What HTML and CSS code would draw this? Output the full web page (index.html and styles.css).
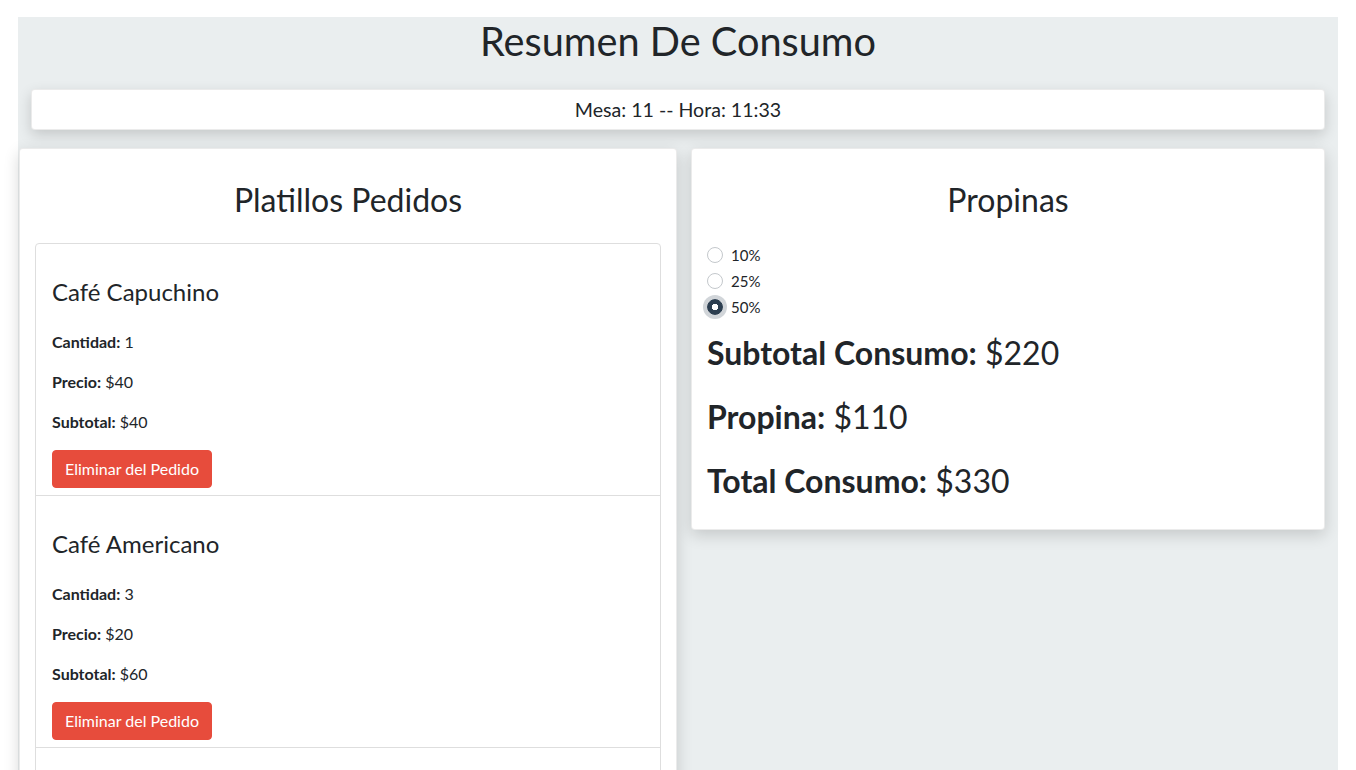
FILE: index.html
```html
<!DOCTYPE html>
<html lang="es">
<head>
<meta charset="utf-8">
<title>Resumen De Consumo</title>
<link rel="stylesheet" href="styles.css">
</head>
<body>
<div class="page">
  <h1 class="title">Resumen De Consumo</h1>
  <div class="info-card">Mesa: 11 -- Hora: 11:33</div>
  <div class="columns">
    <section class="card card-left">
      <h2 class="card-title">Platillos Pedidos</h2>
      <ul class="list">
        <li class="item">
          <h4 class="item-name">Café Capuchino</h4>
          <p class="line"><b>Cantidad:</b> 1</p>
          <p class="line"><b>Precio:</b> $40</p>
          <p class="line"><b>Subtotal:</b> $40</p>
          <button class="btn-danger" type="button">Eliminar del Pedido</button>
        </li>
        <li class="item">
          <h4 class="item-name">Café Americano</h4>
          <p class="line"><b>Cantidad:</b> 3</p>
          <p class="line"><b>Precio:</b> $20</p>
          <p class="line"><b>Subtotal:</b> $60</p>
          <button class="btn-danger" type="button">Eliminar del Pedido</button>
        </li>
        <li class="item">
          <h4 class="item-name">Café Latte</h4>
          <p class="line"><b>Cantidad:</b> 4</p>
          <p class="line"><b>Precio:</b> $30</p>
          <p class="line"><b>Subtotal:</b> $120</p>
          <button class="btn-danger" type="button">Eliminar del Pedido</button>
        </li>
      </ul>
    </section>
    <section class="card card-right">
      <h2 class="card-title">Propinas</h2>
      <div class="radios">
        <label class="radio-row"><input type="radio" name="tip" class="radio"> <span>10%</span></label>
        <label class="radio-row"><input type="radio" name="tip" class="radio"> <span>25%</span></label>
        <label class="radio-row"><input type="radio" name="tip" class="radio focus" checked> <span>50%</span></label>
      </div>
      <h2 class="total"><b>Subtotal Consumo:</b> $220</h2>
      <h2 class="total"><b>Propina:</b> $110</h2>
      <h2 class="total"><b>Total Consumo:</b> $330</h2>
    </section>
  </div>
</div>
</body>
</html>
```

FILE: styles.css
```css
* { box-sizing: border-box; }

html, body {
  margin: 0;
  padding: 0;
  background: #ffffff;
}

body {
  font-family: Lato, "Noto Sans", sans-serif;
  font-size: 16px;
  line-height: 1.5;
  color: #212529;
}

.page {
  width: 1320px;
  margin: 17px auto 0;
  background: #eaeeef;
  padding: 0 13px 40px 0;
  min-height: 900px;
}

.title {
  margin: 0 0 24px 13px;
  font-size: 39.7px;
  font-weight: 400;
  line-height: 48px;
  text-align: center;
}

.info-card {
  margin-left: 13px;
  background: #fff;
  border: 1px solid rgba(0,0,0,0.08);
  border-radius: 4px;
  box-shadow: 0 5px 14px rgba(0,0,0,0.16);
  text-align: center;
  font-size: 19.6px;
  line-height: 25px;
  padding: 7px 16px;
  height: 41px;
}

.columns {
  display: grid;
  grid-template-columns: 658px 634px;
  column-gap: 14px;
  align-items: start;
  margin-top: 18px;
  margin-left: 1px;
}

.card {
  background: #fff;
  border: 1px solid rgba(0,0,0,0.08);
  border-radius: 4px;
  box-shadow: 0 5px 16px rgba(0,0,0,0.16);
  padding: 32px 15px 8px;
}

.card-title {
  margin: 0 0 24px;
  font-size: 32px;
  font-weight: 400;
  line-height: 38.4px;
  text-align: center;
}

.list {
  list-style: none;
  margin: 0;
  padding: 0;
  border: 1px solid #dedede;
  border-radius: 4px;
}

.item {
  padding: 34px 16px 7px;
  border-bottom: 1px solid #dedede;
}

.item-name {
  margin: 0 0 23px;
  font-size: 24px;
  font-weight: 400;
  line-height: 28.8px;
}

.line {
  margin: 0 0 16px;
  font-size: 16px;
  line-height: 24px;
}

.line b { font-weight: 700; }

.btn-danger {
  display: inline-block;
  font-family: inherit;
  font-size: 16px;
  line-height: 22px;
  color: #fff;
  background: #e74c3c;
  border: 1px solid #e74c3c;
  border-radius: 4px;
  padding: 7px 12px;
  height: 38px;
}

.radios {
  display: flex;
  flex-direction: column;
  margin-top: -1px;
  margin-bottom: 9px;
  font-size: 15px;
}

.radio-row {
  display: flex;
  align-items: center;
  height: 26px;
  gap: 8px;
}

.radio {
  appearance: none;
  -webkit-appearance: none;
  margin: 0;
  width: 16px;
  height: 16px;
  border: 1px solid #c4c8cc;
  border-radius: 50%;
  background: #fff;
}

.radio:checked {
  background: radial-gradient(circle, #fff 0 3px, #2c3e50 3.5px);
  border-color: #2c3e50;
}

.radio.focus {
  box-shadow: 0 0 0 4px rgba(44,62,80,0.22);
}

.total {
  margin: 0 0 16px;
  font-size: 32px;
  font-weight: 400;
  line-height: 48px;
}

.total b { font-weight: 700; }
```
